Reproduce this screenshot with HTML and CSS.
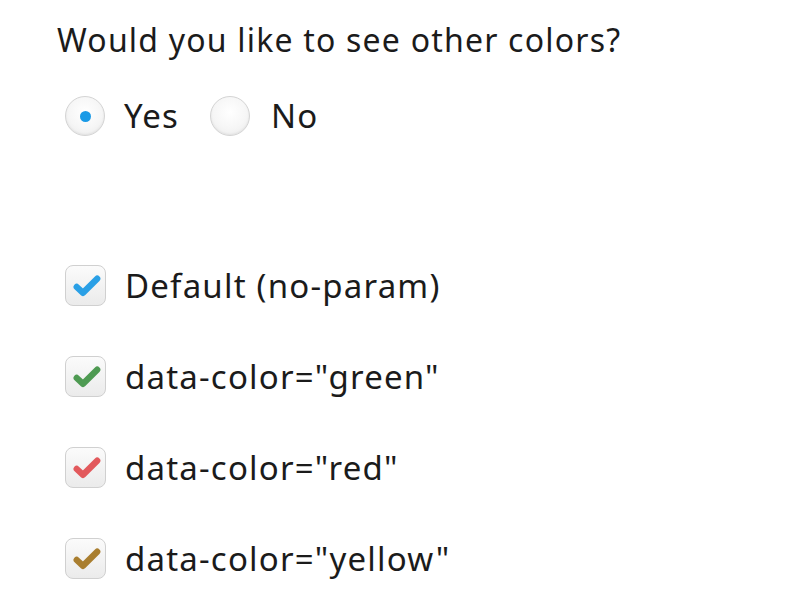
FILE: index.html
```html
<!DOCTYPE html>
<html>
<head>
<meta charset="utf-8">
<link rel="stylesheet" href="styles.css">
</head>
<body>
<div class="page">
  <p class="question">Would you like to see other colors?</p>
  <div class="radios">
    <label class="option">
      <span class="radio checked"><span class="dot"></span></span>
      <span class="label">Yes</span>
    </label>
    <label class="option">
      <span class="radio"></span>
      <span class="label">No</span>
    </label>
  </div>
  <div class="checks">
    <label class="option">
      <span class="box"><svg viewBox="0 0 40 40" class="tick blue"><path d="M11 21 L17.5 27 L32 12.5"/></svg></span>
      <span class="label">Default (no-param)</span>
    </label>
    <label class="option">
      <span class="box"><svg viewBox="0 0 40 40" class="tick green"><path d="M11 21 L17.5 27 L32 12.5"/></svg></span>
      <span class="label">data-color="green"</span>
    </label>
    <label class="option">
      <span class="box"><svg viewBox="0 0 40 40" class="tick red"><path d="M11 21 L17.5 27 L32 12.5"/></svg></span>
      <span class="label">data-color="red"</span>
    </label>
    <label class="option">
      <span class="box"><svg viewBox="0 0 40 40" class="tick yellow"><path d="M11 21 L17.5 27 L32 12.5"/></svg></span>
      <span class="label">data-color="yellow"</span>
    </label>
  </div>
</div>
</body>
</html>
```
FILE: styles.css
```css
html, body {
  margin: 0;
  background: #ffffff;
}
.page {
  padding: 16px 0 0 57px;
  font-family: "Noto Sans", "Open Sans", sans-serif;
  color: #1b1b1b;
}
.question {
  margin: 0;
  font-size: 32px;
  letter-spacing: 1.2px;
  line-height: 48px;
}
.radios {
  display: flex;
  gap: 31px;
  margin-top: 32px;
}
.option {
  display: flex;
  align-items: center;
  gap: 19px;
  margin-left: 8px;
}
.radios .option + .option {
  margin-left: 0;
  gap: 21px;
}
.label {
  font-size: 33px;
  letter-spacing: 1.2px;
  line-height: 40px;
}
.radio {
  box-sizing: border-box;
  width: 40px;
  height: 40px;
  border-radius: 50%;
  border: 1px solid #d4d4d4;
  background: radial-gradient(circle at 50% 40%, #ffffff 0%, #f6f6f6 55%, #e8e8e8 100%);
  box-shadow: inset 0 -1px 2px rgba(0,0,0,0.06);
  display: flex;
  align-items: center;
  justify-content: center;
}
.dot {
  width: 11px;
  height: 11px;
  border-radius: 50%;
  background: #1a9ae6;
}
.checks {
  display: flex;
  flex-direction: column;
  gap: 50px;
  margin-top: 129px;
}
.box {
  box-sizing: border-box;
  width: 41px;
  height: 41px;
  border-radius: 8px;
  border: 1px solid #d0d0d0;
  background: linear-gradient(#fbfbfb, #ebebeb);
  display: flex;
  align-items: center;
  justify-content: center;
}
.tick {
  width: 40px;
  height: 40px;
}
.tick path {
  fill: none;
  stroke-width: 6.5;
  stroke-linecap: round;
  stroke-linejoin: round;
}
.tick.blue path { stroke: #2aa0e6; }
.tick.green path { stroke: #4e9a52; }
.tick.red path { stroke: #e2595c; }
.tick.yellow path { stroke: #a97e2f; }
```
